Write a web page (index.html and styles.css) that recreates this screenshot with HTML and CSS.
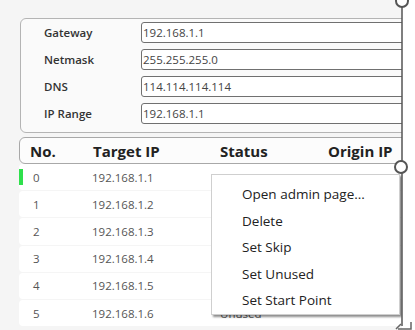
FILE: index.html
```html
<!DOCTYPE html>
<html lang="en">
<head>
    <meta charset="UTF-8">
    <meta name="viewport" content="width=device-width, initial-scale=1.0">
    <title>Scanner</title>
    <link rel="stylesheet" href="styles.css">
</head>
<body>
    <div class="app">
        <div class="settings">
            <div class="field">
                <label>Gateway</label>
                <div class="input">192.168.1.1</div>
            </div>
            <div class="field">
                <label>Netmask</label>
                <div class="input">255.255.255.0</div>
            </div>
            <div class="field">
                <label>DNS</label>
                <div class="input">114.114.114.114</div>
            </div>
            <div class="field">
                <label>IP Range</label>
                <div class="input">192.168.1.1</div>
            </div>
        </div>

        <div class="table-head">
            <span class="col-no">No.</span>
            <span class="col-ip">Target IP</span>
            <span class="col-status">Status</span>
            <span class="col-origin">Origin IP</span>
        </div>

        <div class="rows" id="rows">
            <!-- rows -->
        </div>

        <div class="menu">
            <div class="menu-item">Open admin page...</div>
            <div class="menu-item">Delete</div>
            <div class="menu-item">Set Skip</div>
            <div class="menu-item">Set Unused</div>
            <div class="menu-item">Set Start Point</div>
        </div>
    </div>

    <svg class="handles" width="415" height="330" viewBox="0 0 415 330">
        <line x1="402" y1="0" x2="402" y2="326" stroke="#555" stroke-width="1.5"/>
        <circle cx="402" cy="1" r="6" fill="#fff" stroke="#555" stroke-width="2"/>
        <circle cx="401" cy="167" r="6" fill="#fff" stroke="#555" stroke-width="2"/>
        <path d="M396 329 L401 324 M398 329 L411 329 L411 322" fill="none" stroke="#666" stroke-width="1.5"/>
    </svg>

    <script>
        const rows = document.getElementById('rows');
        for (let i = 0; i < 6; i++) {
            // rows 1-4 sit under the context menu, their status is not seen
            const status = (i === 0 || i === 5) ? 'Unused' : '';
            const row = document.createElement('div');
            row.className = 'row' + (i === 0 ? ' current' : '');
            row.innerHTML = `
                <span class="col-no">${i}</span>
                <span class="col-ip">192.168.1.${i + 1}</span>
                <span class="col-status">${status}</span>
            `;
            rows.appendChild(row);
        }
    </script>
</body>
</html>
```

FILE: styles.css
```css
body {
    margin: 0;
    background-color: #fff;
    font-family: "Open Sans", "Noto Sans", sans-serif;
    width: 415px;
    height: 330px;
    overflow: hidden;
    position: relative;
}

.app {
    width: 402px;
    height: 330px;
    overflow: hidden;
    background-color: #f5f5f5;
    padding: 18px 0 0 19px;
    box-sizing: border-box;
    position: relative;
}

.settings {
    margin-left: 1px;
    width: 420px;
    height: 115px;
    box-sizing: border-box;
    border: 1px solid #b4b4b4;
    border-radius: 6px;
    background-color: #fafafa;
    padding: 3px 0 0 23px;
    display: flex;
    flex-direction: column;
    gap: 6px;
}

.field {
    display: flex;
    align-items: center;
    height: 21px;
}

.field label {
    width: 97px;
    font-size: 11.5px;
    font-weight: 600;
    color: #333;
}

.input {
    flex: 1;
    height: 21px;
    box-sizing: border-box;
    border: 1px solid #707070;
    border-radius: 3px;
    background-color: #fff;
    font-size: 11.5px;
    color: #444;
    line-height: 19px;
    padding-left: 1px;
}

.table-head {
    margin-top: 4px;
    width: 420px;
    height: 27px;
    box-sizing: border-box;
    border: 1px solid #a8a8a8;
    border-radius: 6px;
    background-color: #fcfcfc;
    display: flex;
    align-items: center;
    font-size: 15px;
    font-weight: 700;
    color: #222;
}

.table-head .col-no {
    margin-left: 10px;
    width: 63px;
}

.table-head .col-ip {
    width: 127px;
}

.table-head .col-status {
    width: 108px;
}

.rows {
    display: flex;
    flex-direction: column;
    gap: 1px;
}

.row {
    height: 26.2px;
    width: 420px;
    background-color: #fff;
    border-radius: 4px;
    display: flex;
    align-items: center;
    font-size: 11.5px;
    color: #555;
    position: relative;
}

.row .col-no {
    margin-left: 14px;
    width: 59px;
}

.row .col-ip {
    width: 128px;
}

.row.current::before {
    content: "";
    position: absolute;
    left: 0;
    top: 5px;
    width: 4px;
    height: 16px;
    background-color: #2fe04c;
}

.menu {
    position: absolute;
    left: 211px;
    top: 174px;
    width: 189px;
    height: 141px;
    box-sizing: border-box;
    background-color: #fff;
    border: 1px solid #cfcfcf;
    box-shadow: 2px 2px 2px rgba(0, 0, 0, 0.45);
    padding-top: 6px;
}

.menu-item {
    height: 26.5px;
    line-height: 26px;
    padding-left: 30px;
    font-size: 13.5px;
    color: #222;
}

.handles {
    position: absolute;
    left: 0;
    top: 0;
}
```
